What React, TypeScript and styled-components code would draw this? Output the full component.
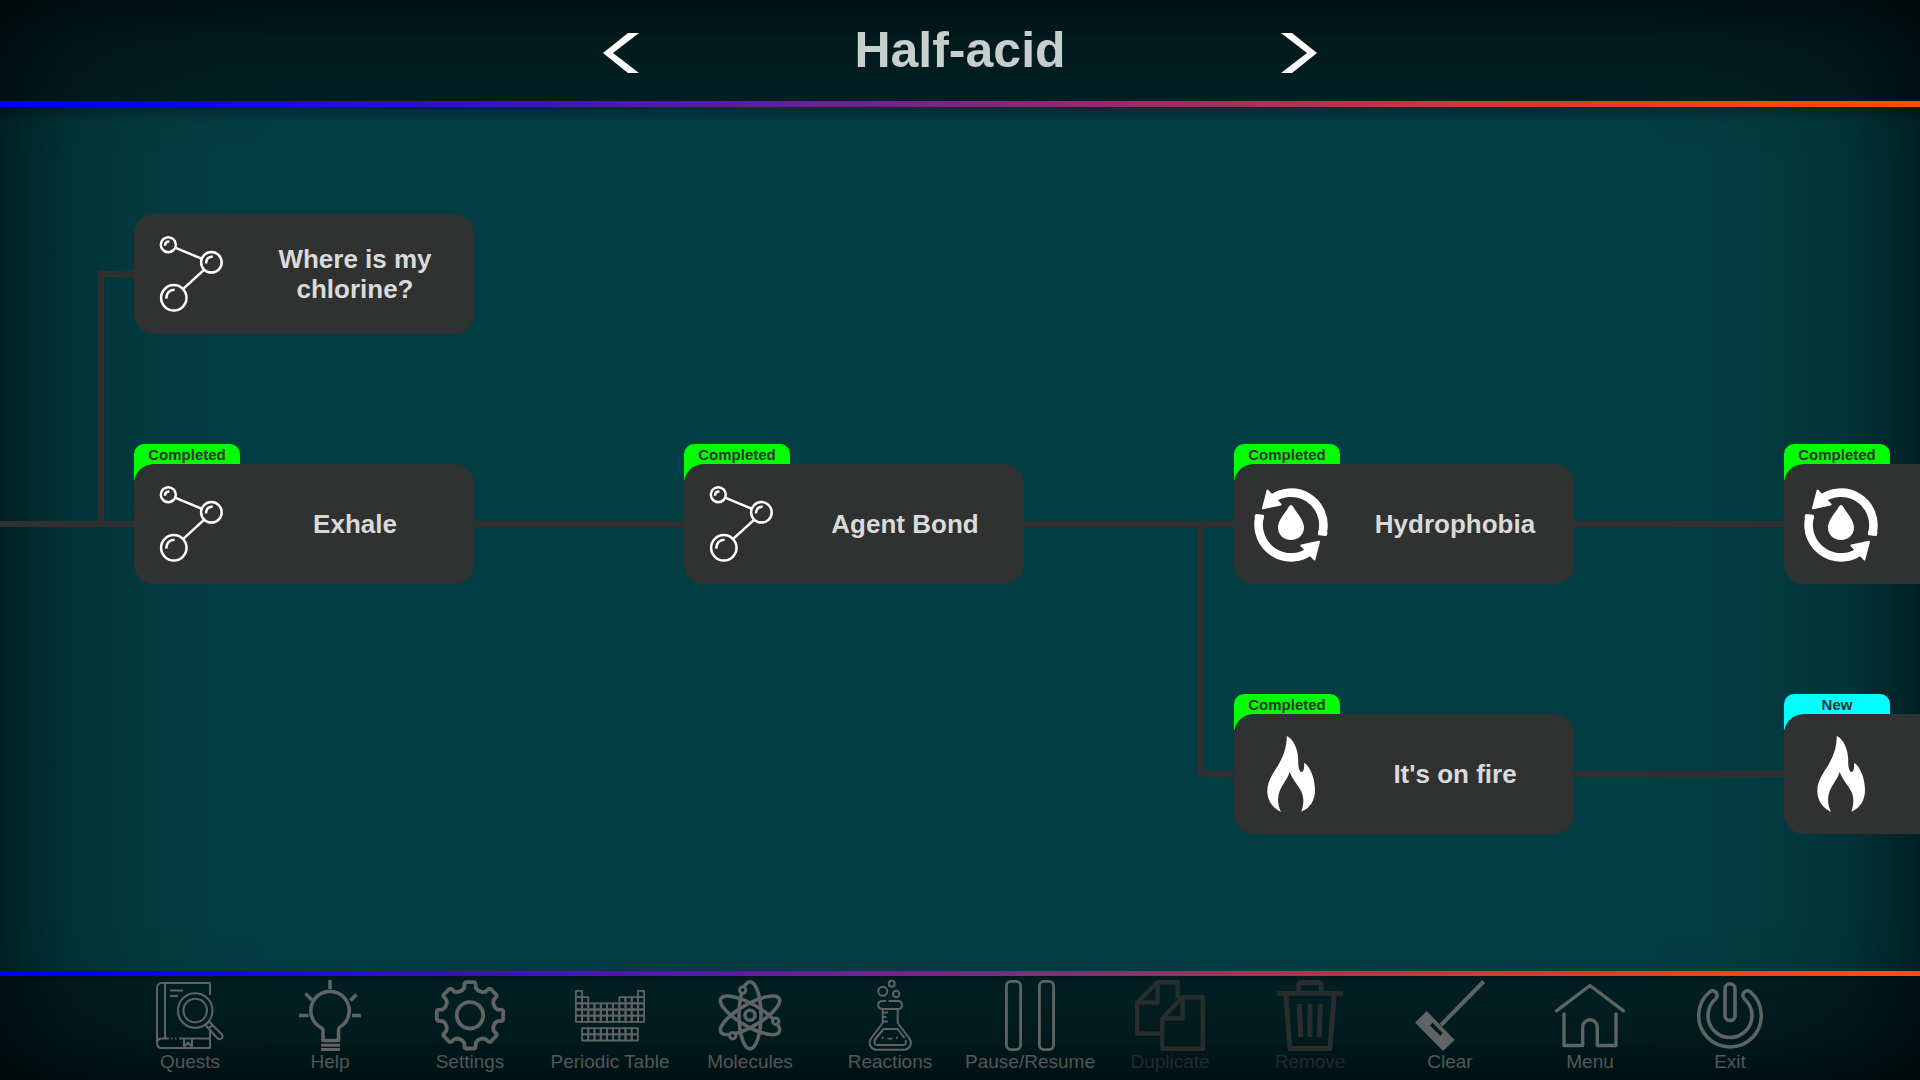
import React from 'react';
import styled, { createGlobalStyle } from 'styled-components';

const GlobalStyle = createGlobalStyle`
  * { box-sizing: border-box; }
  body { margin: 0; background: #000; }
  button { font: inherit; color: inherit; border: 0; padding: 0; background: none; cursor: pointer; }
`;

const fade = (side: string, s: number[]) =>
  `linear-gradient(${side}, rgba(0,0,0,.5) 0, rgba(0,0,0,.34) ${s[0]}px, rgba(0,0,0,.2) ${s[1]}px, rgba(0,0,0,.08) ${s[2]}px, rgba(0,0,0,.03) ${s[3]}px, rgba(0,0,0,0) ${s[4]}px)`;

const wide = [34, 68, 134, 200, 300];
const tall = [20, 40, 76, 112, 168];

const Screen = styled.div`
  height: 100vh;
  display: flex;
  flex-direction: column;
  overflow: hidden;
  font-family: 'Liberation Sans', Arial, sans-serif;
  background:
    ${fade('to right', wide)},
    ${fade('to left', wide)},
    ${fade('to bottom', tall)},
    ${fade('to top', tall)},
    #023e44;
`;

const Header = styled.header`
  flex: none;
  display: flex;
  justify-content: center;
  padding-top: 4px;
  height: 101px;
  background: rgba(0, 0, 0, 0.47);
`;

const ChapterNav = styled.nav`
  display: flex;
  align-items: center;
  justify-content: space-between;
  width: 714px;
  color: #fff;
`;

const Title = styled.h1`
  margin: 0;
  padding-bottom: 6px;
  font-size: 50px;
  line-height: 56px;
  color: #c8cdcd;
`;

const ArrowButton = styled.button`
  display: flex;
`;

const Rule = styled.div<{ $size: number }>`
  flex: none;
  height: ${(p) => p.$size}px;
  background: linear-gradient(to right, #0000ff 4%, #ff4b00 97%);
`;

const Board = styled.main`
  position: relative;
  flex: 1;
  overflow: hidden;
  background: linear-gradient(to bottom, rgba(0, 0, 0, 0.25), rgba(0, 0, 0, 0) 16px);
`;

const Link = styled.div`
  position: absolute;
  background: #322f30;
`;

const Node = styled.div`
  position: absolute;
  width: 340px;
`;

const Badge = styled.span<{ $fresh: boolean }>`
  position: absolute;
  left: 0;
  top: -20px;
  width: 106px;
  height: 36px;
  border-radius: 10px 10px 0 0;
  font-size: 15px;
  font-weight: bold;
  line-height: 22px;
  text-align: center;
  color: #303131;
  background: ${(p) => (p.$fresh ? '#00ffff' : '#00ff00')};
`;

const Card = styled.button`
  position: relative;
  display: flex;
  align-items: center;
  width: 100%;
  height: 120px;
  padding-left: 19px;
  border-radius: 20px;
  background: #303131;
  color: #fff;
`;

const CardTitle = styled.span`
  flex: 1;
  padding-left: 7px;
  font-size: 26px;
  font-weight: bold;
  line-height: 30px;
  text-align: center;
  color: #dadada;
`;

const Toolbar = styled.footer`
  flex: none;
  display: flex;
  justify-content: center;
  padding: 4px 0 7px;
  background: linear-gradient(to bottom, rgba(0, 0, 0, 0.2), rgba(0, 0, 0, 0) 8px), rgba(0, 0, 0, 0.47);
`;

const Tool = styled.button`
  flex: 0 1 140px;
  display: flex;
  flex-direction: column;
  align-items: center;
  gap: 1px;
  color: #5f6363;
  &:disabled { color: #292d2d; cursor: default; }
`;

const ToolLabel = styled.span`
  font-size: 19px;
  line-height: 22px;
  white-space: nowrap;
  color: #535858;
  ${Tool}:disabled & { color: #25292a; }
`;

const Glyph = styled.svg`
  display: block;
  flex: none;
  fill: none;
  stroke: currentColor;
  overflow: visible;
`;

/* ---------- card icons, drawn on a 76 unit square ---------- */

const MoleculeIcon = () => (
  <Glyph width="76" height="76" viewBox="0 0 76 76" strokeWidth="2.5">
    <circle cx="15.3" cy="8.7" r="7.5" />
    <circle cx="58.4" cy="26.3" r="10.3" />
    <circle cx="20.8" cy="61.8" r="12.7" />
    <path d="M22.6 11.8L48.4 22.6M51 33.8L30.2 52.8" />
    <path d="M12 9.8c0-2.6 1.6-4.2 4.4-4.2M53 27.6c0-4.4 2.6-7 6.8-7.2M13.2 62.6c.2-5.4 3.4-8.6 8.4-8.8" />
  </Glyph>
);

const HalfCycle = ({ turn = 0 }: { turn?: number }) => (
  <g transform={`rotate(${turn} 38 39)`}>
    <path d="M17 14.3A32.5 32.5 0 0 1 69.6 46.5" strokeWidth="8.6" />
    <path d="M66.6 46L73 47L72.4 48.6L66.4 47.8Z" strokeWidth="3" strokeLinejoin="round" fill="currentColor" />
    <path d="M14.6 4.6L10 22.3L27.6 18.4L18.8 9.2Z" strokeWidth="2" strokeLinejoin="round" fill="currentColor" />
  </g>
);

const CycleIcon = () => (
  <Glyph width="76" height="76" viewBox="0 0 76 76">
    <HalfCycle />
    <HalfCycle turn={180} />
    <path
      d="M38 19C39.2 19 40 20.4 41 22C44.4 27.6 51 34.6 51 41.6C51 48.8 45.4 54 38 54S25 48.8 25 41.6C25 34.6 31.6 27.6 35 22C36 20.4 36.8 19 38 19Z"
      fill="currentColor"
      stroke="none"
    />
  </Glyph>
);

const FlameIcon = () => (
  <Glyph width="76" height="76" viewBox="0 0 76 76">
    <path
      d="M33.7 0C40 2.6 45.2 13 45.2 24C45.2 29 45.5 34.5 48.3 36C50.8 36 51.6 31 51 26.7C57.5 30.5 62 43 62 54C62 64 57.5 72 48.3 75.7C50.8 69 51.5 61 47.5 54C43.5 47.5 39 42.5 36.7 36C34.5 43 29.5 48 26.5 55.5C24 62.5 25 69.5 28 76C19.5 72 14.3 64.5 14.3 55C14.3 45 20 37.5 25 29.5C30 21 34 11 33.7 0Z"
      fill="currentColor"
      stroke="none"
    />
  </Glyph>
);

/* ---------- toolbar icons, drawn on a 70 unit square ---------- */

const ToolGlyph = ({ weight, children }: { weight: number; children: React.ReactNode }) => (
  <Glyph width="70" height="70" viewBox="0 0 70 70" strokeWidth={weight} strokeLinejoin="round">
    {children}
  </Glyph>
);

const QuestsIcon = () => (
  <ToolGlyph weight={2}>
    <path d="M55 15V3H7Q2 3 2 8V63Q2 68 7 68H55V49M10 3V58M2 63Q2 58.5 7 58.5H14M24 58.5H55M16 58.5H17.5M20 58.5H21.5" />
    <path d="M29 58.5V68H37V58.5M30 66L33 62.5L36 66" />
    <path d="M15 10.5H28M15 16H23" />
    <circle cx="40.2" cy="30.5" r="17.3" />
    <circle cx="40.2" cy="30.5" r="11.8" />
    <path d="M50.5 45L54.5 41.5L57.5 45L53.5 48.5ZM53.5 48.5L57.5 45L67 54.5Q68.5 57 66.5 58.5Q64 60 62 58Z" />
  </ToolGlyph>
);

const HelpIcon = () => (
  <ToolGlyph weight={3.6}>
    <path d="M28 60.5V50.5Q28 48.5 25.5 47.3A19.2 19.2 0 1 1 44.5 47.3Q43.5 48.5 43.5 50.5V60.5Z" />
    <path d="M26 65.2H45M26 69.6H45" strokeWidth="3" />
    <path d="M35 0V9M10.5 13.5L17 20M61.5 14.5L55.5 20.5M4 35.5H13.5M57 35.5H66" />
  </ToolGlyph>
);

const toothProfile = [
  [-8, -24.8], [-5.8, -27.5], [-5.5, -32], [-4.3, -33.2],
  [4.3, -33.2], [5.5, -32], [5.8, -27.5], [8, -24.8],
];

const gearPath = (() => {
  const points: string[] = [];
  for (let i = 0; i < 8; i += 1) {
    const a = (i * Math.PI) / 4;
    toothProfile.forEach(([x, y]) => {
      const px = 35 + x * Math.cos(a) - y * Math.sin(a);
      const py = 35.3 + x * Math.sin(a) + y * Math.cos(a);
      points.push(`${px.toFixed(2)} ${py.toFixed(2)}`);
    });
  }
  return `M${points.join('L')}Z`;
})();

const SettingsIcon = () => (
  <ToolGlyph weight={3.8}>
    <path d={gearPath} />
    <circle cx="35" cy="35.3" r="13.2" />
  </ToolGlyph>
);

const cells: Array<[number, number]> = [];
for (let c = 0; c < 11; c += 1) {
  if (c === 0 || c === 10) cells.push([c, 0]);
  if (c < 2 || c > 6) cells.push([c, 1]);
  for (let r = 2; r < 5; r += 1) cells.push([c, r]);
  if (c > 0 && c < 10) cells.push([c, 6], [c, 7]);
}

const PeriodicIcon = () => (
  <ToolGlyph weight={1.8}>
    {cells.map(([c, r]) => (
      <rect key={`${c}-${r}`} x={0.9 + c * 6.2} y={10.9 + r * 6.2} width="6.2" height="6.2" />
    ))}
  </ToolGlyph>
);

const MoleculesIcon = () => (
  <ToolGlyph weight={3.6}>
    {[0, 60, 120].map((a) => (
      <ellipse key={a} cx="35" cy="35.3" rx="11" ry="33.6" transform={`rotate(${a} 35 35.3)`} />
    ))}
    <circle cx="35" cy="35.3" r="5" />
    <g fill="#002022" strokeWidth="3">
      <circle cx="27.7" cy="10" r="3.2" />
      <circle cx="60.7" cy="41.3" r="3.2" />
      <circle cx="17.7" cy="55.8" r="3.2" />
    </g>
  </ToolGlyph>
);

const ReactionsIcon = () => (
  <ToolGlyph weight={2}>
    <circle cx="36.7" cy="3.8" r="3" />
    <circle cx="27.8" cy="11.3" r="4.5" />
    <circle cx="41.2" cy="14" r="3.2" />
    <path d="M31 21H27Q23.2 21.5 23.2 25.2Q23.5 29 27.7 29H42.7Q47 29 47 25.2Q47 21.5 43.5 21H33.5" />
    <path d="M27.7 29V43L16 58.5Q13 63.5 16.5 67.5Q18.5 69.8 22 69.8H48.5Q52 69.8 54 67.5Q57.5 63.5 54.5 58.5L42.7 43V29" />
    <path d="M28 32.5H33M28 37H31.5M28 41.5H33" />
    <path d="M49.5 58L42.5 49H28.5L20 59.5Q18 65 23 65H47.5Q52.5 65 50.5 60" />
    <path d="M27.7 56.5V59M42 56.5V59M32.5 58Q35 60 37.5 58" strokeWidth="1.6" />
  </ToolGlyph>
);

const PauseIcon = () => (
  <ToolGlyph weight={2.8}>
    <rect x="11.4" y="1.4" width="14.2" height="68.2" rx="4.5" />
    <rect x="44.4" y="1.4" width="14.2" height="68.2" rx="4.5" />
  </ToolGlyph>
);

const DuplicateIcon = () => (
  <ToolGlyph weight={4.4}>
    <path d="M25 53.5H2.2V22.5L22.5 2.2H42.7V18M22.5 2.2V22.5H2.2" />
    <path d="M27.3 38.5V68.8H67.8V17.3H47.5L27.3 38.5H47.5V17.3" />
  </ToolGlyph>
);

const RemoveIcon = () => (
  <ToolGlyph weight={5}>
    <path d="M23.7 12V5.5Q23.7 2.6 26.5 2.6H43.5Q46.3 2.6 46.3 5.5V12M2 13.3H68M10.8 15L15 68.4H55L59.2 15" />
    <path d="M24.3 24L25.8 57M35 24V57M45.7 24L44.2 57" />
  </ToolGlyph>
);

const ClearIcon = () => (
  <ToolGlyph weight={4}>
    <path d="M68.7 1.5L26 45" />
    <path
      d="M11.7 31L39.7 60L28 71L0 42.5ZM17.5 42.5L15 45.5L25.5 56L27.5 53Z"
      fill="currentColor"
      fillRule="evenodd"
      stroke="none"
    />
  </ToolGlyph>
);

const MenuIcon = () => (
  <ToolGlyph weight={3.4}>
    <path d="M1.5 30.8L35 5.5L68.5 30.8" strokeLinecap="round" />
    <path d="M9 34V65.5H27.7V47A7.3 7.3 0 0 1 42.3 47V65.5H61V34" strokeLinecap="round" />
  </ToolGlyph>
);

const ExitIcon = () => (
  <ToolGlyph weight={3.6}>
    <rect x="30" y="3.8" width="10" height="36.8" rx="5" />
    <path d="M14.5 12A31.3 31.3 0 1 0 55.5 12A4.6 4.6 0 0 0 49.5 19A22 22 0 1 1 20.5 19A4.6 4.6 0 0 0 14.5 12Z" />
  </ToolGlyph>
);

/* ---------- data ---------- */

type Quest = {
  col: number;
  row: number;
  icon: () => React.JSX.Element;
  title?: string;
  status?: 'Completed' | 'New';
};

const quests: Quest[] = [
  { col: 0, row: 0, icon: MoleculeIcon, title: 'Where is my chlorine?' },
  { col: 0, row: 1, icon: MoleculeIcon, title: 'Exhale', status: 'Completed' },
  { col: 1, row: 1, icon: MoleculeIcon, title: 'Agent Bond', status: 'Completed' },
  { col: 2, row: 1, icon: CycleIcon, title: 'Hydrophobia', status: 'Completed' },
  { col: 3, row: 1, icon: CycleIcon, status: 'Completed' },
  { col: 2, row: 2, icon: FlameIcon, title: "It's on fire", status: 'Completed' },
  { col: 3, row: 2, icon: FlameIcon, status: 'New' },
];

const links = [
  { left: 0, top: 414, width: 1800, height: 6 },
  { left: 98, top: 164, width: 40, height: 6 },
  { left: 98, top: 164, width: 6, height: 250 },
  { left: 1198, top: 420, width: 6, height: 250 },
  { left: 1198, top: 664, width: 600, height: 6 },
];

const tools = [
  { label: 'Quests', icon: QuestsIcon },
  { label: 'Help', icon: HelpIcon },
  { label: 'Settings', icon: SettingsIcon },
  { label: 'Periodic Table', icon: PeriodicIcon },
  { label: 'Molecules', icon: MoleculesIcon },
  { label: 'Reactions', icon: ReactionsIcon },
  { label: 'Pause/Resume', icon: PauseIcon },
  { label: 'Duplicate', icon: DuplicateIcon, disabled: true },
  { label: 'Remove', icon: RemoveIcon, disabled: true },
  { label: 'Clear', icon: ClearIcon },
  { label: 'Menu', icon: MenuIcon },
  { label: 'Exit', icon: ExitIcon },
];

const Arrow = ({ points }: { points: string }) => (
  <Glyph width="36" height="40" viewBox="0 0 36 40">
    <polygon points={points} fill="currentColor" stroke="none" />
  </Glyph>
);

export default function App() {
  return (
    <Screen>
      <GlobalStyle />
      <Header>
        <ChapterNav>
          <ArrowButton type="button" aria-label="Previous">
            <Arrow points="25,0 36,0 10,20 36,40 25,40 0,20" />
          </ArrowButton>
          <Title>Half-acid</Title>
          <ArrowButton type="button" aria-label="Next">
            <Arrow points="11,0 0,0 26,20 0,40 11,40 36,20" />
          </ArrowButton>
        </ChapterNav>
      </Header>
      <Rule $size={6} />
      <Board>
        {links.map((link, i) => (
          <Link key={i} style={link} />
        ))}
        {quests.map(({ col, row, icon: Icon, title, status }) => (
          <Node key={`${col}-${row}`} style={{ left: 134 + col * 550, top: 107 + row * 250 }}>
            {status && <Badge $fresh={status === 'New'}>{status}</Badge>}
            <Card type="button">
              <Icon />
              <CardTitle>{title}</CardTitle>
            </Card>
          </Node>
        ))}
      </Board>
      <Rule $size={5} />
      <Toolbar>
        {tools.map(({ label, icon: Icon, disabled }) => (
          <Tool key={label} type="button" disabled={disabled}>
            <Icon />
            <ToolLabel>{label}</ToolLabel>
          </Tool>
        ))}
      </Toolbar>
    </Screen>
  );
}
